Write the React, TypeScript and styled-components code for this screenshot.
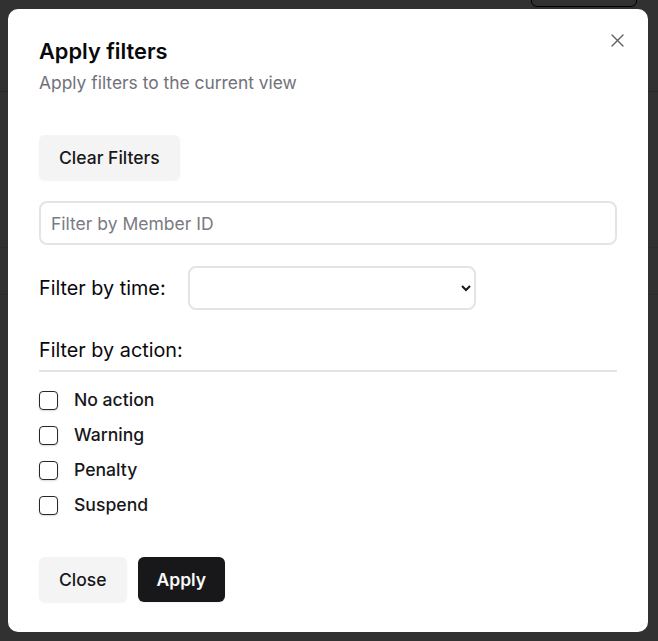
import React from 'react'
import styled, { createGlobalStyle } from 'styled-components'

const GlobalStyle = createGlobalStyle`
  * { box-sizing: border-box; }
  html, body {
    margin: 0;
    padding: 0;
    height: 100%;
    background: #2f2f2f;
    font-family: Inter, "Noto Sans", sans-serif;
  }
`

// the page that sits under the dimmed backdrop
const Page = styled.div`
  height: 641px;
  background: #f4f4f5;
`

const PageHeader = styled.header`
  height: 92px;
  border-bottom: 1px solid #c9c9c9;
  display: flex;
  justify-content: flex-end;
  padding-right: 21px;
`

const HeaderButton = styled.div`
  width: 106px;
  height: 9px;
  margin-top: -2px;
  border: 1px solid #000;
  border-radius: 0 0 6px 6px;
`

const PageRow = styled.div<{ $height: number }>`
  height: ${p => p.$height}px;
  border-bottom: 1px solid #dedede;
`

const Backdrop = styled.div`
  position: fixed;
  inset: 0;
  background: rgba(0, 0, 0, 0.8);
  display: flex;
  align-items: center;
  justify-content: center;
  padding-right: 2px;
`

const Dialog = styled.div`
  position: relative;
  width: 640px;
  height: 623px;
  background: #fff;
  border-radius: 10px;
  padding: 28px 31px 30px 31px;
  display: flex;
  flex-direction: column;
`

const CloseIcon = styled.button`
  position: absolute;
  top: 22px;
  right: 22px;
  width: 18px;
  height: 18px;
  padding: 0;
  border: none;
  background: none;
  color: #5f5f5f;
  display: flex;
  align-items: center;
  justify-content: center;
  cursor: pointer;
`

const Title = styled.h2`
  margin: 0;
  font-size: 21.8px;
  line-height: 28px;
  font-weight: 600;
  color: #09090b;
`

const Subtitle = styled.p`
  margin: 5px 0 0 0;
  font-size: 17.4px;
  line-height: 26px;
  color: #71717a;
`

const Body = styled.div`
  margin-top: 39px;
  display: flex;
  flex-direction: column;
  flex: 1;
`

const Button = styled.button<{ $primary?: boolean }>`
  height: 45px;
  padding: 0 ${p => (p.$primary ? 19 : 20)}px;
  border: none;
  border-radius: 6px;
  font-family: inherit;
  font-size: 17.5px;
  font-weight: ${p => (p.$primary ? 600 : 450)};
  background: ${p => (p.$primary ? '#18181b' : '#f4f4f5')};
  color: ${p => (p.$primary ? '#fafafa' : '#18181b')};
  box-shadow: 0 1px 2px rgba(0, 0, 0, 0.05);
  cursor: pointer;
`

const ClearRow = styled.div`
  display: flex;
`

const TextInput = styled.input`
  margin-top: 21px;
  width: 100%;
  height: 44px;
  padding: 0 10px;
  border: 2px solid #e4e4e7;
  border-radius: 8px;
  font-family: inherit;
  font-size: 17.5px;
  color: #18181b;
  outline: none;
  &::placeholder { color: #7a7a82; }
`

const TimeRow = styled.div`
  margin-top: 21px;
  display: flex;
  align-items: center;
  gap: 22px;
`

const Label = styled.span`
  font-size: 19.8px;
  line-height: 28px;
  color: #09090b;
`

const Select = styled.select`
  width: 288px;
  height: 44px;
  border: 2px solid #e4e4e7;
  border-radius: 8px;
  background: #fff;
  font-family: inherit;
  font-size: 17.5px;
  padding: 0 8px;
  color: #18181b;
`

const Section = styled.div`
  margin-top: 26px;
  padding-bottom: 6px;
  border-bottom: 2px solid #e4e4e7;
`

const CheckList = styled.div`
  margin-top: 16px;
  display: flex;
  flex-direction: column;
  gap: 11px;
`

const CheckRow = styled.label`
  display: flex;
  align-items: center;
  gap: 16px;
  font-size: 17.6px;
  line-height: 24px;
  font-weight: 450;
  color: #18181b;
  cursor: pointer;
`

const Box = styled.span`
  width: 19px;
  height: 19px;
  border: 1.5px solid #27272a;
  border-radius: 4px;
  box-shadow: 0 1px 2px rgba(0, 0, 0, 0.15);
  background: #fff;
`

const Footer = styled.div`
  margin-top: auto;
  display: flex;
  gap: 11px;
`

const actions = ['No action', 'Warning', 'Penalty', 'Suspend']

export default function App() {
  return (
    <>
      <GlobalStyle />
      <Page>
        <PageHeader>
          <HeaderButton />
        </PageHeader>
        <PageRow $height={156} />
        <PageRow $height={47} />
      </Page>
      <Backdrop>
        <Dialog role="dialog">
          <CloseIcon aria-label="Close">
            <svg width="15" height="15" viewBox="0 0 15 15" fill="none">
              <path d="M2 2L13 13M13 2L2 13" stroke="currentColor" strokeWidth="1.4" strokeLinecap="round" />
            </svg>
          </CloseIcon>
          <Title>Apply filters</Title>
          <Subtitle>Apply filters to the current view</Subtitle>
          <Body>
            <ClearRow>
              <Button>Clear Filters</Button>
            </ClearRow>
            <TextInput placeholder="Filter by Member ID" />
            <TimeRow>
              <Label>Filter by time:</Label>
              <Select defaultValue="">
                <option value=""></option>
                <option value="24h">Last 24 hours</option>
                <option value="7d">Last 7 days</option>
              </Select>
            </TimeRow>
            <Section>
              <Label>Filter by action:</Label>
            </Section>
            <CheckList>
              {actions.map(a => (
                <CheckRow key={a}>
                  <Box />
                  {a}
                </CheckRow>
              ))}
            </CheckList>
            <Footer>
              <Button>Close</Button>
              <Button $primary>Apply</Button>
            </Footer>
          </Body>
        </Dialog>
      </Backdrop>
    </>
  )
}
